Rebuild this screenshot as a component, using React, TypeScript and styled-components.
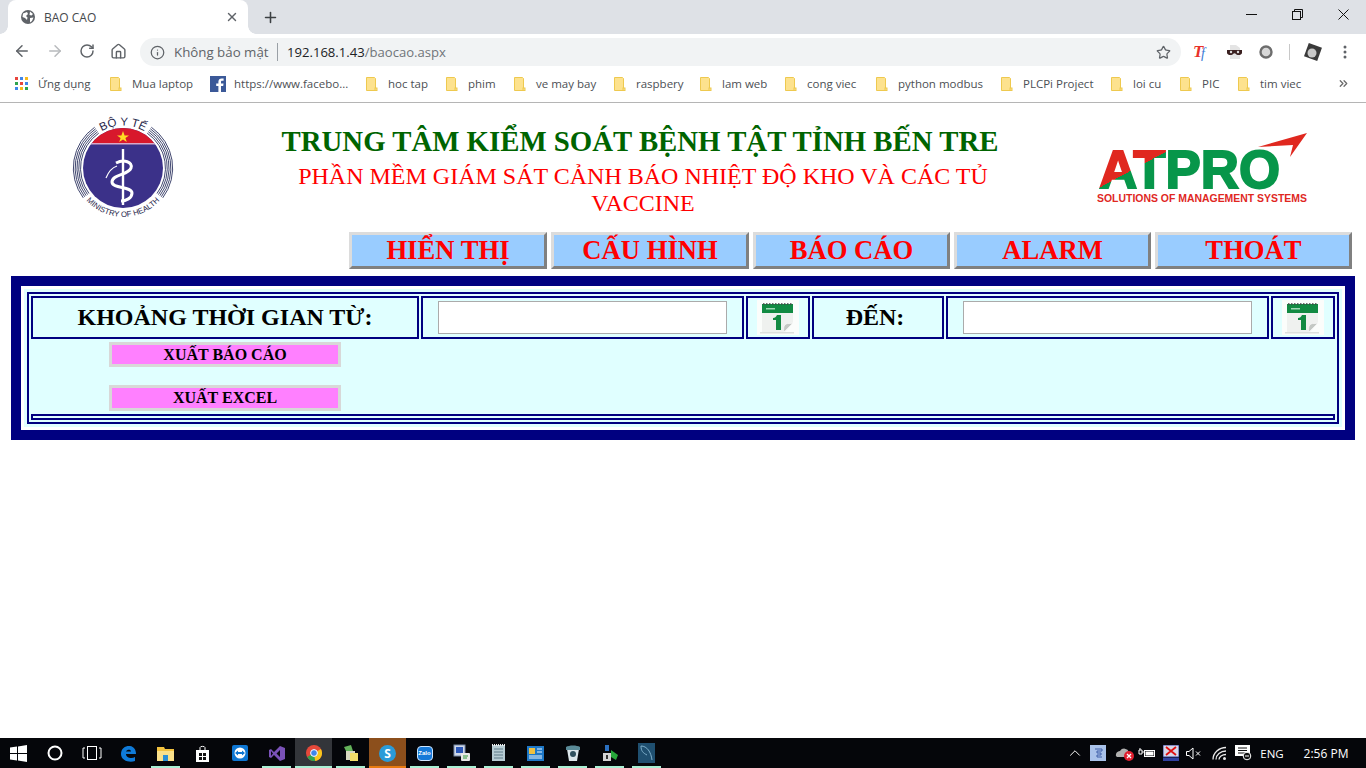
import React from "react";
import styled, { createGlobalStyle } from "styled-components";
import { ArrowLeft, ArrowRight, RotateCw, Home, Info, Star, Plus, X, ChevronUp, ChevronsRight } from "lucide-react";

const Global = createGlobalStyle`
  html, body { margin: 0; padding: 0; background: #fff; height: 768px; overflow: hidden; }
  * { box-sizing: border-box; }
`;

const Screen = styled.div`
  width: 1366px; height: 768px; display: flex; flex-direction: column;
  font-family: "Liberation Serif", serif; overflow: hidden;
`;
const TabStrip = styled.div`
  height: 34px; background: #dee1e6; display: flex; align-items: stretch; padding-left: 8px;
  font-family: "Open Sans", sans-serif;
`;
const Tab = styled.div`
  width: 240px; position: relative; background: #fff; border-radius: 8px 8px 0 0; display: flex; align-items: center;
  padding: 0 9px 0 12px; color: #45484c; font-size: 12px; gap: 8px;
  &::before, &::after { content: ""; position: absolute; bottom: 0; width: 8px; height: 8px; }
  &::before { left: -8px; background: radial-gradient(circle at 0 0, #dee1e6 7.5px, #fff 8px); }
  &::after { right: -8px; background: radial-gradient(circle at 100% 0, #dee1e6 7.5px, #fff 8px); }
`;
const TabTitle = styled.span` flex: 1; `;
const NewTab = styled.div`
  width: 44px; display: flex; align-items: center; justify-content: center; color: #3c4043;
`;
const WindowControls = styled.div` margin-left: auto; display: flex; `;
const WinButton = styled.div`
  width: 46px; height: 29px; display: flex; align-items: center; justify-content: center;
`;
const Toolbar = styled.div`
  height: 34px; display: flex; align-items: center; background: #fff; padding-left: 6px; color: #5f6368;
  font-family: "Open Sans", sans-serif;
`;
const NavIcon = styled.div<{ $w: number; $c?: string }>`
  width: ${p => p.$w}px; display: flex; justify-content: center; color: ${p => p.$c || "#5f6368"};
`;
const Omnibox = styled.div`
  width: 1041px; height: 28px; margin-left: 6px; margin-top: 2px; border-radius: 14px; background: #f1f3f4;
  display: flex; align-items: center; padding: 0 10px 0 10px; font-size: 13.3px; color: #5f6368;
`;
const Insecure = styled.span` margin-left: 9px; width: 103px; white-space: nowrap; `;
const Divider = styled.span` width: 1px; height: 18px; background: #9aa0a6; `;
const Url = styled.span` margin-left: 9px; color: #202124; font-size: 13.1px; white-space: nowrap; flex: 1;
  em { font-style: normal; color: #70757a; }
`;
const Tools = styled.div` display: flex; align-items: center; margin-left: 5px; margin-top: 2px; `;
const ToolSep = styled.span` width: 1px; height: 16px; background: #c8c8c8; margin: 0 11px 0 7px; `;
const Bookmarks = styled.div`
  height: 35px; border-bottom: 1px solid #b5b5b5; display: flex; align-items: center; padding: 0 0 3px 15px;
  font-family: "Open Sans", sans-serif; font-size: 11.5px; color: #4c4f54;
`;
const Apps = styled.div`
  width: 13px; height: 13px; flex: none; display: grid; grid-template-columns: repeat(3, 3px); grid-auto-rows: 3px; gap: 2px;
`;
const Dot = styled.span<{ $c: string }>` background: ${p => p.$c}; `;
const Label = styled.span<{ $w: number }>`
  width: ${p => p.$w}px; white-space: nowrap; margin-left: 10px;
`;
const Mark = styled.div<{ $w: number }>`
  display: flex; align-items: center; flex: none; width: ${p => p.$w}px; white-space: nowrap;
`;
const MarkText = styled.span<{ $ml: number }>` margin-left: ${p => p.$ml}px; `;
const More = styled.div` margin-left: auto; margin-right: 16px; color: #6b6b6b; display: flex; `;

const Header = styled.header`
  height: 129px; display: flex; align-items: flex-start; padding-left: 68px;
`;
const MinistrySvg = styled.svg` width: 110px; height: 106px; margin-top: 10px; flex: none; `;
const HeadText = styled.div` width: 726px; margin-left: 102px; padding-top: 20px; text-align: center; `;
const Title = styled.h1`
  margin: 0; padding-right: 6px; font-size: 28.8px; line-height: 37px; font-weight: bold; color: #006400; white-space: nowrap;
`;
const Subtitle = styled.div`
  margin-top: 3px; font-size: 24px; line-height: 27px; color: #ff0000;
`;
const AtproSvg = styled.svg` width: 212px; height: 74px; margin-left: 91px; margin-top: 29px; flex: none; `;

const NavBar = styled.nav`
  display: grid; grid-template-columns: 198px 198px 197px 197px 197px; gap: 4px; justify-content: end; padding-right: 14px;
`;
const NavButton = styled.button`
  height: 37px; padding: 0; background: #99ccff; color: #ff0000; font: bold 26.67px/31px "Liberation Serif", serif;
  border: 3px solid; border-color: #dcdcdc #808080 #808080 #dcdcdc;
`;

const Panel = styled.section`
  margin: 7px 0 0 11px; width: 1344px; border: 10px solid #000080; background: #fff; padding: 3px;
`;
const PanelInner = styled.div` background: #e0ffff; padding: 3px; `;
const OuterTable = styled.div` border: 2px solid #000080; padding: 2px; display: flex; flex-direction: column; `;
const FilterRow = styled.div`
  display: grid; grid-template-columns: 388px 323px 64px 132px 323px 64px; gap: 2px;
`;
const Cell = styled.div<{ $pr?: number }>`
  height: 43px; border: 2px solid #000080; display: flex; align-items: center; justify-content: center;
  padding-right: ${p => p.$pr || 0}px;
  font-size: 24px; font-weight: bold; color: #000;
`;
const DateInput = styled.input`
  width: 289px; height: 33px; background: #fff; border: 1px solid #ababab; padding: 0; outline: none; margin-top: -1px;
`;
const CalSvg = styled.svg` width: 42px; height: 35px; margin-top: -1px; `;
const Actions = styled.div`
  display: flex; flex-direction: column; gap: 18px; padding: 3px 0 3px 78px; align-items: flex-start;
`;
const ActionButton = styled.button<{ $h: number }>`
  width: 232px; height: ${p => p.$h}px; padding: 0; border: 3px solid #d8d8d8; background: #ff80ff; color: #000;
  font: bold 16px/18px "Liberation Serif", serif;
`;
const EmptyCell = styled.div` height: 6px; border: 2px solid #000080; `;
const Spacer = styled.div` flex: 1; `;

const Taskbar = styled.footer`
  height: 30px; background: #05060a; display: flex; align-items: stretch; color: #fff;
  font-family: "Open Sans", sans-serif; margin-top: auto;
`;
const TaskItem = styled.div<{ $open?: boolean; $bg?: string; $line?: string }>`
  width: 37px; position: relative; display: flex; align-items: center; justify-content: center;
  background: ${p => p.$bg || "transparent"};
  &:first-child { width: 36px; }
  &::after {
    content: ""; display: ${p => (p.$open ? "block" : "none")}; position: absolute; bottom: 0; left: ${p => (p.$bg ? 0 : 4)}px; right: ${p => (p.$bg ? 0 : 4)}px; height: 2px;
    background: ${p => p.$line || "#a9f0d4"};
  }
`;
const Tray = styled.div` margin-left: auto; display: flex; align-items: center; `;
const TrayIcon = styled.div<{ $ml: number }>`
  width: 20px; margin-left: ${p => p.$ml}px; display: flex; justify-content: center; align-items: center;
`;
const Lang = styled.span` font-size: 11.5px; width: 38px; text-align: center; `;
const Clock = styled.span` font-size: 12px; width: 70px; text-align: center; margin-right: 5px; `;
const BadgeS = styled.span`
  width: 17px; height: 17px; border-radius: 50%; background: #2a9bd8; color: #fff; font: bold 12px/17px "Open Sans", sans-serif; text-align: center;
`;
const ZaloBox = styled.span`
  width: 16px; height: 15px; border-radius: 4px; background: #1679d8; border: 1px solid #cfe6ff; color: #fff; font: bold 6px/13px "Liberation Sans", sans-serif; text-align: center;
`;

const bookmarks: [string, number][] = [
  ["hoc tap", 80],
  ["phim", 68],
  ["ve may bay", 100],
  ["raspbery", 86],
  ["lam web", 85],
  ["cong viec", 91],
  ["python modbus", 125],
  ["PLCPi Project", 110],
  ["loi cu", 69],
  ["PIC", 58],
  ["tim viec", 80],
];

const Folder = () => (
  <svg width="16" height="16" viewBox="0 0 16 16" style={{ flex: "none" }}>
    <path d="M3.500 1.500h8l1 1v12h-9z" fill="#fde28e" stroke="#eec94f" strokeWidth="1" />
    <rect x="12" y="12" width="2" height="2.500" fill="#fde28e" stroke="#eec94f" />
  </svg>
);

const Globe = () => (
  <svg width="16" height="16" viewBox="0 0 16 16">
    <circle cx="8" cy="8" r="7" fill="#5f6368" />
    <path d="M3 4.500 7 3l1 2-2 2 1.500 1.500L7 11 5 9 2.500 8zM10 2.500l3 2.500-1.500 1.500-2-.5zM10 9l3.500-.5L12 12l-2 1.500z" fill="#fff" />
  </svg>
);

const Ministry = () => (
  <MinistrySvg viewBox="0 0 110 106">
    <defs>
      <path id="topArc" d="M22 28 A 43 43 0 0 1 88 28" />
      <path id="botArc" d="M9 71.800 A 49 49 0 0 0 101 71.800" />
      <clipPath id="disc"><circle cx="55" cy="55" r="40" /></clipPath>
    </defs>
    {[42.5, 44.300, 46.100, 47.900, 49.700].map(r => (
      <g key={r} fill="none" stroke="#2d3360" strokeWidth="0.900">
        <path d={`M${55 - r * 0.57} ${55 - r * 0.82} A ${r} ${r} 0 0 0 ${55 - r * 0.8} ${55 + r * 0.6}`} />
        <path d={`M${55 + r * 0.57} ${55 - r * 0.82} A ${r} ${r} 0 0 1 ${55 + r * 0.8} ${55 + r * 0.6}`} />
      </g>
    ))}
    <g clipPath="url(#disc)">
      <rect x="10" y="10" width="90" height="90" fill="#3b3189" />
      <rect x="10" y="10" width="90" height="20" fill="#d8182c" />
      <rect x="10" y="30" width="90" height="1.500" fill="#d9a8c8" />
    </g>
    <polygon points="55,18 56.600,22.400 61,22.400 57.400,25 58.800,29 55,26.400 51.200,29 52.600,25 49,22.400 53.400,22.400" fill="#ffdd22" />
    <path d="M55 36V92" stroke="#fff" strokeWidth="2.400" />
    <path d="M48 50c8-4 17-1 15 5-2 7-19 6-19 14 0 7 20 4 20 11 0 5-6 8-11 8" fill="none" stroke="#fff" strokeWidth="3" />
    <path d="M38 65c2-5 5-10 11-12" fill="none" stroke="#fff" strokeWidth="1.200" />
    <text fontFamily="Liberation Sans, sans-serif" fontSize="11.500" fill="#26264a"><textPath href="#topArc" startOffset="50%" textAnchor="middle">BỘ Y TẾ</textPath></text>
    <text fontFamily="Liberation Sans, sans-serif" fontSize="7.800" fill="#26264a"><textPath href="#botArc" startOffset="50%" textAnchor="middle">MINISTRY OF HEALTH</textPath></text>
  </MinistrySvg>
);

const Atpro = () => (
  <AtproSvg viewBox="0 0 212 74">
    <defs>
      <linearGradient id="split" gradientUnits="userSpaceOnUse" x1="17" y1="0" x2="57" y2="74">
        <stop offset="0.5" stopColor="#e0281f" />
        <stop offset="0.5" stopColor="#07964a" />
      </linearGradient>
    </defs>
    <text x="2" y="56" fontFamily="Liberation Sans, sans-serif" fontWeight="bold" fontSize="54" fill="url(#split)" stroke="url(#split)" strokeWidth="2" textLength="181" lengthAdjust="spacingAndGlyphs">ATPRO</text>
    <path d="M161 15 210 1 193 25 196 13z" fill="#e0281f" />
    <text x="0" y="70" fontFamily="Liberation Sans, sans-serif" fontWeight="bold" fontSize="10.500" fill="#e0281f" textLength="210" lengthAdjust="spacingAndGlyphs">SOLUTIONS OF MANAGEMENT SYSTEMS</text>
  </AtproSvg>
);

const Calendar = () => (
  <CalSvg viewBox="1 0 42 35">
    <rect x="1" width="42" height="35" fill="#fbfdfb" />
    <path d="M6 4h31v19l-8 9H6z" fill="#eff1ef" />
    <rect x="6" y="4" width="31" height="9" fill="#128a42" />
    <path d="M7 4h29" stroke="#444" strokeWidth="1.500" strokeDasharray="1.500 1.500" />
    <rect x="10" y="8" width="9" height="1.500" fill="#9fd8b4" />
    <path d="M21 15h4v15h-5V20h-3v-2c2 0 3-1 4-3z" fill="#128a42" />
    <path d="M28 32 37 23c-3 1-5 0-7 1s-3 4-2 8z" fill="#c4c8c4" stroke="#fff" strokeWidth="0.600" />
    <rect x="4" y="32" width="34" height="1.500" fill="#dde0dd" />
  </CalSvg>
);

const taskIcons: React.ReactNode[] = [
  <svg width="17" height="17" viewBox="0 0 17 17"><path d="M0 2.600 7 1.600v6.400H0zM8 1.500 17 0v8H8zM0 9h7v6.400L0 14.400zM8 9h9v8l-9-1.400z" fill="#fff" /></svg>,
  <svg width="16" height="16" viewBox="0 0 16 16"><circle cx="8" cy="8" r="6.500" fill="none" stroke="#fff" strokeWidth="2" /></svg>,
  <svg width="20" height="16" viewBox="0 0 20 16" fill="none" stroke="#fff"><rect x="5.500" y="1.500" width="9" height="13" /><path d="M3 3H1v10h2M17 3h2v10h-2" /></svg>,
  <svg width="17" height="17" viewBox="0 0 17 17"><path d="M1 9C1 3 6 .5 10 1c4 .5 6 4 6 8H6c0 4 6 5 9 3v4c-5 2-14 0-14-7zM6 6.500h5C11 4 7 4 6 6.500z" fill="#0f7ad8" /></svg>,
  <svg width="17" height="17" viewBox="0 0 17 17"><path d="M0 2h7l1 2h9v3H0z" fill="#f3c23f" /><path d="M0 6h17v10H0z" fill="#fbe08a" /><path d="M6 10h5v6H6z" fill="#2a8fd6" /></svg>,
  <svg width="15" height="17" viewBox="0 0 15 17"><path d="M1 5h13v12H1z" fill="#fff" /><path d="M5 5V2.500C5 1 10 1 10 2.500V5" stroke="#fff" fill="none" /><path d="M4 8h3v3H4zM8 8h3v3H8zM4 12h3v3H4zM8 12h3v3H8z" fill="#111" /></svg>,
  <svg width="16" height="16" viewBox="0 0 16 16"><rect width="16" height="16" rx="2" fill="#0e76d2" /><circle cx="8" cy="8" r="5.500" fill="#fff" /><path d="M3 8l3-2.500v1.500h4V5.500L13 8l-3 2.500V9H6v1.500z" fill="#0e76d2" /></svg>,
  <svg width="17" height="17" viewBox="0 0 17 17"><path d="M12 1l5 2v11l-5 2-6-6-3 3-2-1V5l2-1 3 3zM3 6v5l2-2.500zM12 5 8.500 8.500 12 12z" fill="#7a52b8" fillRule="evenodd" /></svg>,
  <svg width="16" height="16" viewBox="0 0 16 16"><circle cx="8" cy="8" r="8" fill="#e5483a" /><path d="M8 8 1.200 12a8 8 0 0 0 8 4z" fill="#2ea44f" /><path d="M8 8l6.900-4a8 8 0 0 1-5.700 12z" fill="#f8c51c" /><circle cx="8" cy="8" r="3.400" fill="#3f86ea" stroke="#fff" /></svg>,
  <svg width="18" height="18" viewBox="0 0 18 18"><path d="M2 3l7-2 2 6-6 2z" fill="#64b25a" /><path d="M4 7h9v9H4z" fill="#d8d8c0" /><path d="M8 9h8v8H8z" fill="#f4e06a" /></svg>,
  <BadgeS>S</BadgeS>,
  <ZaloBox>Zalo</ZaloBox>,
  <svg width="18" height="18" viewBox="0 0 18 18"><rect x="1" y="1" width="11" height="11" fill="#cfd8ea" stroke="#7a8aa5" /><rect x="3" y="3" width="7" height="6" fill="#2b57b8" /><rect x="8" y="9" width="9" height="8" rx="1" fill="#e8e8e8" /><path d="M10 12h5M10 14h4" stroke="#2c9a3a" /></svg>,
  <svg width="15" height="18" viewBox="0 0 15 18"><path d="M1 1h13v16H1z" fill="#b6cbd3" /><path d="M3 5h9M3 8h9M3 11h9M3 14h9" stroke="#5f7b88" /><path d="M1 1h13" stroke="#eee" strokeWidth="2" strokeDasharray="1 1" /></svg>,
  <svg width="17" height="15" viewBox="0 0 17 15"><rect width="17" height="15" fill="#1e78c8" /><rect x="2" y="2" width="6" height="6" fill="#f0c040" /><path d="M10 3h5M10 6h5M2 10h13M2 12h13" stroke="#eaf4ff" /></svg>,
  <svg width="16" height="18" viewBox="0 0 16 18"><path d="M2 5h12l-2 12H4z" fill="#dce6ea" /><path d="M1 3c3-2 11-2 14 0v3H1z" fill="#5a8a98" /><circle cx="8" cy="10" r="3" fill="#30505e" /></svg>,
  <svg width="18" height="18" viewBox="0 0 18 18"><path d="M4 1h4v6H4z" fill="#2a6fc0" /><rect x="2" y="9" width="8" height="8" fill="#d4d4d4" /><rect x="5" y="11" width="2" height="4" fill="#333" /><path d="M10 6l7 5-2 5-5-3z" fill="#27a83a" /></svg>,
  <svg width="17" height="20" viewBox="0 0 17 20"><rect width="17" height="20" fill="#1f4f70" /><path d="M3 3c6 0 10 6 11 14M3 3c0 5 2 7 6 9" stroke="#7fb0cc" fill="none" /></svg>,
];

const openIdx = new Set([4, 7, 8, 9, 10, 11, 12, 13, 14, 15, 16, 17]);

export default function App() {
  return (
    <Screen>
      <Global />
      <TabStrip>
        <Tab>
          <Globe />
          <TabTitle>BAO CAO</TabTitle>
          <X size={14} strokeWidth={2.4} color="#5f6368" />
        </Tab>
        <NewTab><Plus size={17} strokeWidth={2.2} /></NewTab>
        <WindowControls>
          <WinButton>
            <svg width="11" height="11" viewBox="0 0 11 11"><path d="M0 5.500H11" stroke="#111" /></svg>
          </WinButton>
          <WinButton>
            <svg width="11" height="11" viewBox="0 0 11 11" fill="none" stroke="#111"><rect x="0.500" y="2.500" width="8" height="8" /><path d="M2.500 2.500V0.500H10.500V8.500H8.500" /></svg>
          </WinButton>
          <WinButton>
            <svg width="11" height="11" viewBox="0 0 11 11"><path d="M0.500 0.500 10.500 10.500M10.500 0.500 0.500 10.500" stroke="#111" /></svg>
          </WinButton>
        </WindowControls>
      </TabStrip>
      <Toolbar>
        <NavIcon $w={32}><ArrowLeft size={18} strokeWidth={2} /></NavIcon>
        <NavIcon $w={33} $c="#b8babd"><ArrowRight size={18} strokeWidth={2} /></NavIcon>
        <NavIcon $w={31}><RotateCw size={16} strokeWidth={2.2} /></NavIcon>
        <NavIcon $w={32}><Home size={17} strokeWidth={2} /></NavIcon>
        <Omnibox>
          <Info size={15} strokeWidth={2} />
          <Insecure>Không bảo mật</Insecure>
          <Divider />
          <Url>192.168.1.43<em>/baocao.aspx</em></Url>
          <Star size={15} strokeWidth={2} />
        </Omnibox>
        <Tools>
          <NavIcon $w={32}>
            <svg width="18" height="18" viewBox="0 0 18 18"><text x="0" y="14" fontFamily="Liberation Serif, serif" fontStyle="italic" fontWeight="bold" fontSize="17" fill="#e8312a">T</text><text x="8" y="15" fontFamily="Liberation Serif, serif" fontStyle="italic" fontSize="14" fill="#3a7bd5">f</text></svg>
          </NavIcon>
          <NavIcon $w={32}>
            <svg width="17" height="16" viewBox="0 0 17 16"><path d="M4 1h6l4 3v11H4z" fill="#e4e4e4" /><path d="M1 6h15v3c0 2-5 3-6 1-1-1-2-1-3 0-1 2-6 1-6-1z" fill="#3a2020" /><circle cx="5" cy="8" r="1.200" fill="#ddd" /><circle cx="12" cy="8" r="1.200" fill="#ddd" /></svg>
          </NavIcon>
          <NavIcon $w={32}>
            <svg width="14" height="14" viewBox="0 0 14 14"><circle cx="7" cy="7" r="5.500" fill="#d8d8d8" stroke="#6d6d6d" strokeWidth="2.400" /></svg>
          </NavIcon>
          <ToolSep />
          <NavIcon $w={24}>
            <svg width="20" height="20" viewBox="0 0 20 20"><rect x="3" y="3" width="14" height="14" transform="rotate(20 10 10)" fill="#3a3a3a" /><circle cx="9" cy="11" r="4.500" fill="#c9c9c9" /></svg>
          </NavIcon>
          <NavIcon $w={40}>
            <svg width="4" height="14" viewBox="0 0 4 14" fill="#5f6368"><circle cx="2" cy="2" r="1.500" /><circle cx="2" cy="7" r="1.500" /><circle cx="2" cy="12" r="1.500" /></svg>
          </NavIcon>
        </Tools>
      </Toolbar>
      <Bookmarks>
        <Apps>
          {["#e8453c", "#3f86ea", "#f8b81c", "#2ea44f", "#e8453c", "#3f86ea", "#3f86ea", "#f8b81c", "#2ea44f"].map((c, i) => <Dot key={i} $c={c} />)}
        </Apps>
        <Label $w={69}>Ứng dụng</Label>
        <Mark $w={103}><Folder /><MarkText $ml={9}>Mua laptop</MarkText></Mark>
        <Mark $w={153}>
          <svg width="16" height="16" viewBox="0 0 16 16" style={{ flex: "none" }}>
            <rect width="16" height="16" fill="#3b5998" />
            <path d="M11 16v-6h2.200l.3-2.500H11V6c0-.8.300-1.200 1.200-1.200h1.400V2.600C13.200 2.500 12.500 2.500 11.700 2.500c-2 0-3.300 1.200-3.300 3.300v1.700H6.200V10h2.200v6z" fill="#fff" />
          </svg>
          <MarkText $ml={8}>https://www.facebo...</MarkText>
        </Mark>
        {bookmarks.map(([t, w]) => (
          <Mark key={t} $w={w}><Folder /><MarkText $ml={9}>{t}</MarkText></Mark>
        ))}
        <More><ChevronsRight size={13} strokeWidth={2.4} /></More>
      </Bookmarks>

      <Header>
        <Ministry />
        <HeadText>
          <Title>TRUNG TÂM KIỂM SOÁT BỆNH TẬT TỈNH BẾN TRE</Title>
          <Subtitle>PHẦN MỀM GIÁM SÁT CẢNH BÁO NHIỆT ĐỘ KHO VÀ CÁC TỦ VACCINE</Subtitle>
        </HeadText>
        <Atpro />
      </Header>
      <NavBar>
        <NavButton>HIỂN THỊ</NavButton>
        <NavButton>CẤU HÌNH</NavButton>
        <NavButton>BÁO CÁO</NavButton>
        <NavButton>ALARM</NavButton>
        <NavButton>THOÁT</NavButton>
      </NavBar>
      <Panel>
        <PanelInner>
          <OuterTable>
            <FilterRow>
              <Cell>KHOẢNG THỜI GIAN TỪ:</Cell>
              <Cell><DateInput /></Cell>
              <Cell><Calendar /></Cell>
              <Cell $pr={6}>ĐẾN:</Cell>
              <Cell><DateInput /></Cell>
              <Cell><Calendar /></Cell>
            </FilterRow>
            <Actions>
              <ActionButton $h={25}>XUẤT BÁO CÁO</ActionButton>
              <ActionButton $h={26}>XUẤT EXCEL</ActionButton>
            </Actions>
            <EmptyCell />
          </OuterTable>
        </PanelInner>
      </Panel>
      <Spacer />
      <Taskbar>
        {taskIcons.map((ic, i) => (
          <TaskItem
            key={i}
            $open={openIdx.has(i)}
            $bg={i === 8 ? "#33353a" : i === 10 ? "#8c4f1c" : undefined}
            $line={i === 10 ? "#e87a10" : undefined}
          >
            {ic}
          </TaskItem>
        ))}
        <Tray>
          <TrayIcon $ml={0}><ChevronUp size={18} strokeWidth={1.3} /></TrayIcon>
          <TrayIcon $ml={3}>
            <svg width="16" height="16" viewBox="0 0 16 16"><rect width="16" height="16" fill="#a9c2ea" /><path d="M5 4h7v2H7v2h4v2H7v2h5" stroke="#3f5fa8" fill="none" /></svg>
          </TrayIcon>
          <TrayIcon $ml={7}>
            <svg width="20" height="17" viewBox="0 0 20 17"><path d="M1 11a4 4 0 0 1 4-5 5 5 0 0 1 9 1l-3 5H2z" fill="#b0b0b0" /><circle cx="14" cy="11" r="5" fill="#e02030" /><path d="M12 9l4 4M16 9l-4 4" stroke="#fff" strokeWidth="1.300" /></svg>
          </TrayIcon>
          <TrayIcon $ml={2}>
            <svg width="18" height="12" viewBox="0 0 18 12" fill="none" stroke="#fff"><path d="M1 3h3v4H1zM2 1v2M4 5h2" /><rect x="6.500" y="3.500" width="10" height="6" /><rect x="8" y="5" width="7" height="3" fill="#fff" /></svg>
          </TrayIcon>
          <TrayIcon $ml={4}>
            <svg width="16" height="17" viewBox="0 0 16 17"><rect width="16" height="12" fill="#d8d8e8" stroke="#3040a0" /><path d="M3 2l10 8M13 2 3 10" stroke="#e01010" strokeWidth="1.800" /><rect y="13" width="16" height="3" fill="#3040a0" /></svg>
          </TrayIcon>
          <TrayIcon $ml={2}>
            <svg width="17" height="15" viewBox="0 0 17 15" fill="none" stroke="#fff"><path d="M1.500 5.500h2.500L8 2v11L4 9.500H1.500z" /><path d="M11 5.500l4 4M15 5.500l-4 4" /></svg>
          </TrayIcon>
          <TrayIcon $ml={7}>
            <svg width="17" height="15" viewBox="0 0 17 15" fill="none" stroke="#e8e8e8" strokeWidth="1.300"><path d="M1 13.500C1 7 7 1.500 14 1.500M4 13.500C4 9 8.500 5 14 5M7 13.500C7 11 10 8.500 14 8.500" /><circle cx="12.500" cy="12.500" r="1.500" fill="#e8e8e8" stroke="none" /></svg>
          </TrayIcon>
          <TrayIcon $ml={3}>
            <svg width="17" height="16" viewBox="0 0 17 16"><rect width="15" height="11" fill="#fff" /><path d="M3 3h9M3 5.500h9M3 8h9" stroke="#111" /><circle cx="12" cy="11" r="3.800" fill="#111" stroke="#fff" /><path d="M10 11h4" stroke="#fff" /></svg>
          </TrayIcon>
          <Lang>ENG</Lang>
          <Clock>2:56 PM</Clock>
        </Tray>
      </Taskbar>
    </Screen>
  );
}
